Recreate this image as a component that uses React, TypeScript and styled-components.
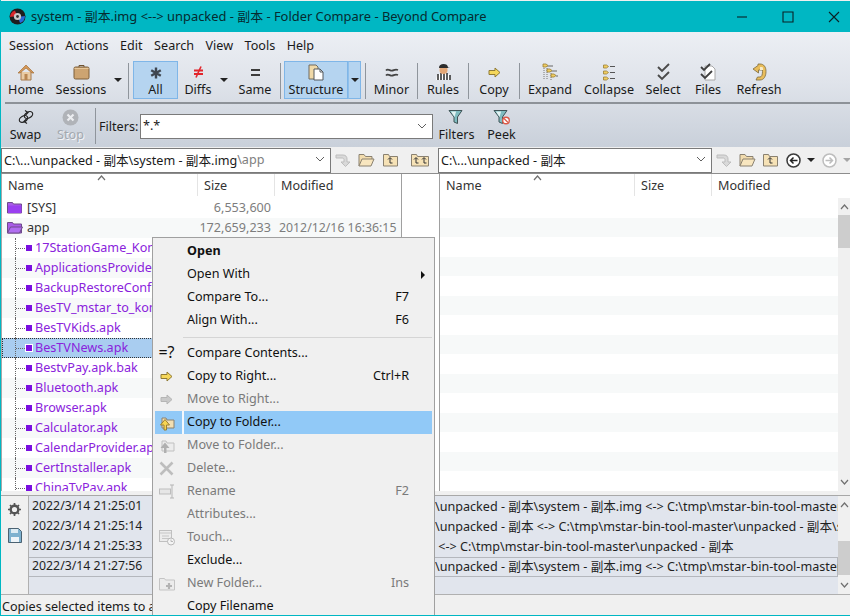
import styled, { createGlobalStyle } from 'styled-components';
import type { ReactNode } from 'react';

const Global = createGlobalStyle`
  html, body { margin: 0; padding: 0; width: 850px; height: 616px; overflow: hidden; background: #fff; }
  body { font-family: "Noto Sans", "Noto Sans CJK SC", sans-serif; font-size: 12.6px; color: #1a1a1a; }
  * { box-sizing: border-box; }
`;

const Window = styled.div`
  position: relative;
  width: 850px;
  height: 616px;
  padding-top: 1px;
  display: flex;
  flex-direction: column;
  border-left: 1px solid #00b7c3;
  border-bottom: 1px solid #00b7c3;
  overflow: hidden;
  background: #f0f0f0;
`;

const TitleBar = styled.div`
  height: 31px;
  flex: none;
  margin-left: -1px;
  background: #00b7c3;
  display: flex;
  align-items: center;
  padding-left: 9px;
  color: #062b30;
  font-size: 12.9px;
`;

const TitleText = styled.span`
  margin-left: 5px;
  padding-bottom: 2px;
  white-space: pre;
  flex: 1;
`;

const WinButtons = styled.div`
  display: flex;
  margin-right: -7px;
`;

const WinButton = styled.div`
  width: 46px;
  display: flex;
  justify-content: center;
  align-items: center;
`;

const Bars = styled.div`
  flex: none;
  background: linear-gradient(#eceff4 0%, #dfe3ea 45%, #c9d0da 100%);
`;

const MenuBar = styled.div`
  height: 28px;
  display: flex;
  align-items: center;
  padding: 0 0 2px 8px;
  gap: 11.5px;
`;

const ToolRow = styled.div`
  height: 42px;
  display: flex;
  align-items: flex-start;
  padding-left: 2px;
  padding-top: 1px;
`;

const Rule = styled.div`
  height: 2px;
  margin-left: 4px;
  background: #8d9298;
`;

const FilterRow = styled.div`
  height: 43px;
  display: flex;
  align-items: flex-start;
  padding-left: 2px;
  padding-top: 2px;
`;

const Tool = styled.div<{ $w: number; $on?: boolean; $off?: boolean }>`
  width: ${(p) => p.$w}px;
  height: 38px;
  flex: none;
  display: flex;
  flex-direction: column;
  align-items: center;
  justify-content: flex-start;
  border: 1px solid ${(p) => (p.$on ? '#7fb6e8' : 'transparent')};
  background: ${(p) => (p.$on ? '#b5d4f0' : 'transparent')};
  color: ${(p) => (p.$off ? '#a3a8af' : 'inherit')};
  text-shadow: ${(p) => (p.$off ? '1px 1px 0 #f4f5f7' : 'none')};
  padding-top: ${(p) => (p.$on ? '2px' : '1px')};
  line-height: 17px;
  white-space: nowrap;
`;

const ToolIcon = styled.div`
  height: 20px;
  display: flex;
  align-items: center;
  justify-content: center;
`;

const Caret = styled.div<{ $w?: number; $on?: boolean; $grey?: boolean }>`
  width: ${(p) => p.$w ?? 10}px;
  height: 38px;
  flex: none;
  display: flex;
  align-items: center;
  justify-content: center;
  border: 1px solid ${(p) => (p.$on ? '#7fb6e8' : 'transparent')};
  border-left: ${(p) => (p.$on ? '1px solid #8fbfeb' : 'none')};
  background: ${(p) => (p.$on ? '#b5d4f0' : 'transparent')};
  &::after {
    content: '';
    border-left: 4px solid transparent;
    border-right: 4px solid transparent;
    border-top: 4px solid ${(p) => (p.$grey ? '#a5a5a5' : '#222')};
  }
`;

const Sep = styled.div<{ $l?: number; $r?: number }>`
  width: 1px;
  height: 36px;
  flex: none;
  margin: 2px ${(p) => p.$r ?? 0}px 0 ${(p) => p.$l ?? 0}px;
  background: #8f959c;
`;

const FilterLabel = styled.span`
  width: 41px;
  margin: 12px 0 0 3px;
  line-height: 17px;
`;

const Combo = styled.div<{ $w: number }>`
  width: ${(p) => p.$w}px;
  height: 25px;
  flex: none;
  display: flex;
  align-items: center;
  justify-content: space-between;
  padding: 0 5px 2px 2px;
  background: #fff;
  border: 1px solid #7a7a7a;
  white-space: pre;
`;

const FilterCombo = styled(Combo)`
  margin: 8px 6px 0 0;
`;

const PathBar = styled.div`
  height: 27px;
  flex: none;
  display: flex;
  align-items: center;
  border-bottom: 1px solid #8d8d8d;
  background: #f0f0f0;
`;

const PathIcon = styled.div<{ $w: number }>`
  width: ${(p) => p.$w}px;
  flex: none;
  display: flex;
  justify-content: center;
  align-items: center;
`;

const Dim = styled.span`
  color: #808080;
`;

const Panes = styled.div`
  flex: 1;
  min-height: 0;
  display: flex;
  background: #fff;
`;

const LeftPane = styled.div`
  width: 438px;
  flex: none;
  overflow: hidden;
`;

const LeftList = styled.div`
  width: 401px;
  height: 100%;
  border-right: 1px solid #a0a0a0;
  border-left: 1px solid #a8a8a8;
  overflow: hidden;
`;

const RightPane = styled.div`
  flex: 1;
  position: relative;
  display: flex;
  flex-direction: column;
  border-left: 1px solid #a0a0a0;
  overflow: hidden;
`;

const Header = styled.div`
  position: relative;
  height: 24px;
  flex: none;
  display: flex;
  align-items: flex-start;
  color: #333;
`;

const SortMark = styled.div<{ $x: number }>`
  position: absolute;
  left: ${(p) => p.$x}px;
  top: 1px;
  display: flex;
`;

const Col = styled.div<{ $w: number; $last?: boolean }>`
  width: ${(p) => p.$w}px;
  height: 22px;
  line-height: 23px;
  flex: none;
  padding-left: 6px;
  border-right: ${(p) => (p.$last ? 'none' : '1px solid #e4e4e4')};
`;

const Row = styled.div<{ $odd?: boolean; $sel?: boolean }>`
  height: 20px;
  padding-bottom: 2px;
  display: flex;
  align-items: center;
  white-space: nowrap;
  position: relative;
  background: ${(p) => (p.$sel ? '#a9cdf0' : p.$odd ? '#f7f9f9' : '#fff')};
  outline: ${(p) => (p.$sel ? '1px dotted #333' : 'none')};
  outline-offset: -1px;
`;

const Blank = styled.div<{ $odd?: boolean }>`
  height: 20px;
  margin-right: 12px;
  background: ${(p) => (p.$odd ? '#f7f9f9' : '#fff')};
`;

const FolderSlot = styled.div`
  width: 25px;
  padding-left: 5px;
  flex: none;
  display: flex;
  align-items: center;
`;

const TreeLine = styled.div`
  position: absolute;
  left: 0;
  top: 0;
  width: 32px;
  height: 20px;
  &::before {
    content: '';
    position: absolute;
    left: 13px;
    top: 0;
    bottom: 0;
    border-left: 1px dotted #666;
  }
  &::after {
    content: '';
    position: absolute;
    left: 14px;
    top: 10px;
    width: 9px;
    border-top: 1px dotted #666;
  }
`;

const Dot = styled.div<{ $sel?: boolean }>`
  position: absolute;
  left: 24px;
  top: 7px;
  width: 6px;
  height: 6px;
  background: #7a10e0;
  outline: ${(p) => (p.$sel ? '1px solid #fff' : 'none')};
`;

const NameText = styled.span<{ $file?: boolean }>`
  color: ${(p) => (p.$file ? '#8a22dc' : '#333')};
  margin-left: ${(p) => (p.$file ? '33px' : '0')};
  width: ${(p) => (p.$file ? '197px' : '170px')};
  flex: none;
`;

const SizeText = styled.span`
  width: 74px;
  text-align: right;
  flex: none;
  color: #7d7d7d;
`;

const DateText = styled.span`
  margin-left: 8px;
  font-size: 12.3px;
  color: #7d7d7d;
`;

const VBar = styled.div<{ $top?: number }>`
  position: absolute;
  right: 0;
  top: ${(p) => p.$top ?? 0}px;
  bottom: 0;
  width: 12px;
  background: #f0f0f0;
  display: flex;
  flex-direction: column;
  align-items: center;
`;

const Chevron = styled.div<{ $down?: boolean }>`
  height: 17px;
  flex: none;
  display: flex;
  align-items: center;
  justify-content: center;
  transform: ${(p) => (p.$down ? 'rotate(180deg)' : 'none')};
`;

const Thumb = styled.div<{ $h: number; $gap?: number }>`
  width: 100%;
  height: ${(p) => p.$h}px;
  margin-top: ${(p) => p.$gap ?? 0}px;
  flex: none;
  background: #cdcdcd;
`;

const Fill = styled.div`
  flex: 1;
`;

const Splitter = styled.div`
  height: 5px;
  flex: none;
  background: #f0f0f0;
  border-bottom: 1px solid #a8a8a8;
`;

const LogArea = styled.div`
  height: 99px;
  flex: none;
  display: flex;
  border-bottom: 1px solid #b0b0b0;
`;

const LogGutter = styled.div`
  width: 27px;
  flex: none;
  display: flex;
  flex-direction: column;
  align-items: center;
  gap: 12px;
  padding-top: 7px;
`;

const LogList = styled.div`
  flex: 1;
  position: relative;
  background: #e1e5ed;
  border-left: 1px solid #b0b0b0;
  padding: 1px 12px 0 0;
  overflow: hidden;
`;

const LogRow = styled.div<{ $cur?: boolean }>`
  height: 20px;
  display: flex;
  align-items: center;
  white-space: pre;
  padding: 0 0 3px 3px;
  border: 1px solid ${(p) => (p.$cur ? '#b4b7bd' : 'transparent')};
  border-left: none;
  color: #1f1f1f;
`;

const LogTime = styled.span`
  width: 403px;
  flex: none;
  font-size: 12.3px;
`;

const Status = styled.div`
  height: 20px;
  flex: none;
  display: flex;
  align-items: center;
  padding: 3px 0 0 1px;
  white-space: nowrap;
`;

const Menu = styled.div`
  position: absolute;
  left: 151px;
  top: 237px;
  width: 283px;
  height: 390px;
  padding: 2px;
  background: #f0f0f0;
  border: 1px solid #a0a0a0;
`;

const Item = styled.div<{ $off?: boolean; $hot?: boolean; $bold?: boolean }>`
  height: 23px;
  display: flex;
  align-items: center;
  color: ${(p) => (p.$off ? '#7a7a7a' : '#111')};
  font-weight: ${(p) => (p.$bold ? 700 : 400)};
  background: ${(p) => (p.$hot ? '#91c9f7' : 'transparent')};
`;

const ItemIcon = styled.div<{ $hot?: boolean }>`
  width: 29px;
  height: 100%;
  flex: none;
  display: flex;
  align-items: center;
  justify-content: center;
  padding-right: 4px;
  border-right: 2px solid ${(p) => (p.$hot ? '#f4f8fc' : 'transparent')};
`;

const ItemSign = styled.span`
  font-size: 16px;
  padding-bottom: 3px;
  white-space: nowrap;
`;

const ItemText = styled.span`
  margin-left: 3px;
  padding-bottom: 3px;
  flex: 1;
`;

const Shortcut = styled.span`
  width: 60px;
  padding-bottom: 3px;
  text-align: right;
  white-space: nowrap;
  margin-right: 23px;
`;

const SubArrow = styled.div`
  margin-right: 7px;
  border-top: 4px solid transparent;
  border-bottom: 4px solid transparent;
  border-left: 4px solid #111;
`;

const Divider = styled.div`
  height: 10px;
  margin-left: 28px;
  display: flex;
  align-items: center;
  &::after {
    content: '';
    width: 100%;
    border-top: 1px solid #d5d5d5;
  }
`;

/* icons */
const Svg = ({ w, h, children }: { w: number; h: number; children: ReactNode }) => (
  <svg width={w} height={h} viewBox={`0 0 ${w} ${h}`} fill="none">
    {children}
  </svg>
);

const AppLogo = () => (
  <Svg w={17} h={17}>
    <circle cx="8.5" cy="8.5" r="8" fill="#1e1e1e" />
    <path d="M1 9a7.5 7.5 0 0 1 5-6.5L8 8z" fill="#d8262a" />
    <path d="M16 8a7.5 7.5 0 0 1-5 7L9 9z" fill="#2868d8" />
    <circle cx="8.5" cy="8.5" r="3.6" fill="#c9c9c9" />
    <circle cx="8.5" cy="8.5" r="1.4" fill="#333" />
  </Svg>
);

const Home = () => (
  <Svg w={18} h={17}>
    <path d="M4 8v8h10V8" fill="#e9cba4" stroke="#a67b4d" />
    <path d="M1 9l8-8 8 8-2 0-6-5-6 5z" fill="#d49858" stroke="#a5703a" strokeWidth=".7" />
    <rect x="7.5" y="10" width="3" height="6" fill="#b88652" />
  </Svg>
);

const Case = () => (
  <Svg w={17} h={16}>
    <path d="M6 3V1.5h5V3" stroke="#6e5230" />
    <rect x="1" y="3" width="15" height="12" rx="1.5" fill="#cda471" stroke="#7c5f3a" />
    <path d="M1.5 4.5h14" stroke="#e6c79b" />
  </Svg>
);

const Star = () => (
  <Svg w={12} h={12}>
    <path d="M6 .5v11M1.2 3.2l9.6 5.6M10.8 3.2L1.2 8.8" stroke="#3f4650" strokeWidth="2.4" />
  </Svg>
);

const NotEq = () => (
  <Svg w={11} h={12}>
    <path d="M1 4.5h9M1 8h9" stroke="#e2262c" strokeWidth="2" />
    <path d="M8 .5L3 11.5" stroke="#e2262c" strokeWidth="1.6" />
  </Svg>
);

const Eq = () => (
  <Svg w={11} h={9}>
    <path d="M1 2h9M1 7h9" stroke="#3c3c3c" strokeWidth="2" />
  </Svg>
);

const Docs = () => (
  <Svg w={16} h={17}>
    <path d="M1 1h7l2 2v12H1z" fill="#f0d9a8" stroke="#6f6a60" />
    <path d="M6 5h6l3 3v8H6z" fill="#fff" stroke="#55585c" />
    <path d="M12 5v3h3" stroke="#55585c" />
  </Svg>
);

const Waves = () => (
  <Svg w={14} h={11}>
    <path d="M1 3.5c2-2.5 4 .5 6 .2s3-2 6-.7M1 8.5c2-2.5 4 .5 6 .2s3-2 6-.7" stroke="#444" strokeWidth="1.7" />
  </Svg>
);

const Referee = () => (
  <Svg w={17} h={18}>
    <path d="M1 17l1-5 4-2h5l4 2 1 5z" fill="#fff" />
    <path d="M3 11v6M6 10v7M9 10v7M12 10v7M15 12v5" stroke="#2a2a2a" strokeWidth="1.5" />
    <circle cx="8.5" cy="7" r="4" fill="#e5a877" />
    <path d="M4 5c0-3 2-4 4.500-4S13 2 13 4.500l2 .5H4z" fill="#2c2c2c" />
  </Svg>
);

const YellowArrow = ({ off }: { off?: boolean }) => (
  <Svg w={13} h={11}>
    <path
      d="M1 3.500h6V1l5 4.500L7 10V7.500H1z"
      fill={off ? '#c9c9c9' : '#f5d75a'}
      stroke={off ? '#b5b5b5' : '#8f7a35'}
    />
  </Svg>
);

const Tag = ({ x, y }: { x: number; y: number }) => (
  <path d={`M${x} ${y}h3l2 1.500-2 1.500h-3z`} fill="#f0cd62" stroke="#9a7f33" strokeWidth=".8" />
);

const Expand = () => (
  <Svg w={17} h={18}>
    <path d="M2 3v14M5 3v14M9 8v9" stroke="#777" strokeDasharray="1 1" />
    <Tag x={1} y={1} />
    <Tag x={5} y={6} />
    <Tag x={9} y={11} />
    <path d="M6 3h5M10 8h5M14 13h2" stroke="#666" />
  </Svg>
);

const Collapse = () => (
  <Svg w={12} h={17}>
    <Tag x={0.5} y={1} />
    <Tag x={0.5} y={7} />
    <Tag x={0.5} y={13} />
    <path d="M7 2.500h5M7 8.500h5M7 14.500h5" stroke="#555" />
  </Svg>
);

const Select = () => (
  <Svg w={15} h={18}>
    <path d="M2 4l4 4 7-7M2 12l4 4 7-7" stroke="#4a4a4a" strokeWidth="1.9" />
  </Svg>
);

const Files = () => (
  <Svg w={16} h={18}>
    <path d="M5 3h7l3 3v11H5z" fill="#fff" stroke="#a8a8a8" />
    <path d="M1 4l3 3 6-6M1 11l4 4 7-7" stroke="#3f3f3f" strokeWidth="1.8" />
  </Svg>
);

const Refresh = () => (
  <Svg w={15} h={18}>
    <path
      d="M6 1h2c4 0 6 3 6 7.500S12 17 8 17H4l1.500-3H8c1.500 0 2.500-2 2.500-5.500 0-.6 0-1-.1-1.500H6.500v3L1 6l5-3.500z"
      fill="#e9bd5b"
      stroke="#7c6a3a"
      strokeWidth=".8"
    />
    <path d="M8 4h2.500c.5 1 .7 2 .7 3H8z" fill="#f8ecc8" />
  </Svg>
);

const Swap = () => (
  <Svg w={16} h={14}>
    <ellipse cx="5.500" cy="9" rx="4.500" ry="3" transform="rotate(-30 5.500 9)" stroke="#222" strokeWidth="1.200" />
    <ellipse cx="10.500" cy="5" rx="4.500" ry="3" transform="rotate(-30 10.500 5)" stroke="#222" strokeWidth="1.200" />
    <path d="M7 .5l3 2-2.500 2.500M9 13.500l-3-2 2.500-2.500" stroke="#222" strokeWidth="1.200" />
  </Svg>
);

const Stop = () => (
  <Svg w={17} h={17}>
    <circle cx="8.500" cy="8.500" r="8" fill="#b0b3b8" />
    <path d="M5.500 5.500l6 6M11.500 5.500l-6 6" stroke="#eceef1" strokeWidth="2.200" />
  </Svg>
);

const Funnel = ({ no }: { no?: boolean }) => (
  <Svg w={18} h={16}>
    <path d="M1 1.500h13L9.500 8v6.500L6 13V8z" fill="#7fbcc0" stroke="#3f5457" />
    <path d="M3 2.500h5l0 .5L6.500 8z" fill="#e4f3f3" />
    {no && (
      <g>
        <circle cx="13" cy="11.500" r="3.300" fill="#fff" stroke="#dc5a48" strokeWidth="1.400" />
        <path d="M11 9.500l4 4" stroke="#dc5a48" strokeWidth="1.300" />
      </g>
    )}
  </Svg>
);

const CurveArrow = () => (
  <Svg w={16} h={14}>
    <path d="M1 2h7c3 0 4 2 4 4v3h3l-4.500 4.500L6 9h3V6.500C9 5.500 8 5 7 5H1z" fill="#d9d9d9" stroke="#bdbdbd" />
  </Svg>
);

const OpenFolder = () => (
  <Svg w={17} h={14}>
    <path d="M1 13V1.500h5l1.500 2H14v2.500" fill="#f2dcae" stroke="#8a8170" />
    <path d="M1 13l3-7h12l-3 7z" fill="#f8e6bf" stroke="#8a8170" />
  </Svg>
);

const UpFolder = ({ two }: { two?: boolean }) => (
  <Svg w={two ? 18 : 15} h={14}>
    <path d={`M.5 13V1.500h5l1 2h${two ? 11 : 8}V13z`} fill="#f6e2b6" stroke="#8a8170" />
    <path d="M5 6.500l2-2 2 2M7 5v5h2.500" stroke="#333" strokeWidth="1" transform={two ? 'translate(-2 0)' : undefined} />
    {two && <path d="M11 6.500l2-2 2 2M13 5v5h2.500" stroke="#333" strokeWidth="1" />}
  </Svg>
);

const NavCircle = ({ off, flip }: { off?: boolean; flip?: boolean }) => (
  <Svg w={15} h={15}>
    <circle cx="7.500" cy="7.500" r="6.500" fill="#fff" stroke={off ? '#bdbdbd' : '#3a3a3a'} strokeWidth="1.500" />
    <path
      d={flip ? 'M3.500 7.500h7M7.500 4.500l3 3-3 3' : 'M4 7.500h7.500M7.500 4.500l-3 3 3 3'}
      stroke={off ? '#bdbdbd' : '#222'}
      strokeWidth="1.500"
    />
  </Svg>
);

const ComboArrow = () => (
  <Svg w={10} h={6}>
    <path d="M1 1l4 4 4-4" stroke="#606060" />
  </Svg>
);

const Up = ({ w = 10 }: { w?: number }) => (
  <Svg w={w} h={6}>
    <path d={`M1 5l${w / 2 - 1}-4 ${w / 2 - 1} 4`} stroke="#707070" strokeWidth="1.200" />
  </Svg>
);

const Folder = ({ open }: { open?: boolean }) => (
  <Svg w={16} h={13}>
    <path d="M.5 12V1.500h5l1 1.500h8v9z" fill="#a95de8" stroke="#6e4b8a" />
    {open ? (
      <path d="M.5 12l3-6h12l-3 6z" fill="#b06ef0" stroke="#6e4b8a" />
    ) : (
      <path d="M1 4.500h13.500V12H1z" fill="#9a3ff0" />
    )}
  </Svg>
);

const Gear = () => (
  <Svg w={13} h={13}>
    <circle cx="6.500" cy="6.500" r="3.800" stroke="#555" strokeWidth="2.400" />
    <path d="M6.500 0v13M0 6.500h13M2 2l9 9M11 2l-9 9" stroke="#555" strokeWidth="1.700" strokeDasharray="2.200 8.600" />
  </Svg>
);

const Disk = () => (
  <Svg w={14} h={15}>
    <path d="M.5.500h10l3 3v11H.5z" fill="#7db1cf" stroke="#4b6272" />
    <rect x="3" y="1" width="7" height="4" fill="#dcebf3" />
    <rect x="3" y="9" width="8" height="5" fill="#eef4f8" />
  </Svg>
);

const FolderCopy = () => (
  <Svg w={16} h={16}>
    <path d="M3 13V3h4l1 2h7v8z" fill="#f3dfb2" stroke="#8a8170" />
    <path d="M5 15v-5H1.500L6 4.500 10.500 10H7.500v5z" fill="#f7d552" stroke="#9a7f33" />
  </Svg>
);

const FolderMove = () => (
  <Svg w={16} h={16}>
    <path d="M3 13V3h4l1 2h7v8z" fill="#ececec" stroke="#c0c0c0" />
    <path d="M5 15v-5H1.500L6 4.500 10.500 10H7.500v5z" fill="#b0b0b0" />
  </Svg>
);

const Cross = () => (
  <Svg w={15} h={15}>
    <path d="M1.500 1.500l12 12M13.500 1.500l-12 12" stroke="#bdbdbd" strokeWidth="2.600" />
  </Svg>
);

const RenameIcon = () => (
  <Svg w={16} h={15}>
    <rect x=".5" y="5" width="11" height="5" fill="#e6e6e6" stroke="#bdbdbd" />
    <path d="M11 1h4M13 1v13M11 14h4" stroke="#b5b5b5" />
  </Svg>
);

const TouchIcon = () => (
  <Svg w={16} h={16}>
    <rect x=".5" y=".5" width="12" height="11" fill="#ececec" stroke="#c0c0c0" />
    <path d="M1 3h11M3 6h7M3 8.500h7" stroke="#c6c6c6" />
    <circle cx="12" cy="11.500" r="3.500" fill="#f4f4f4" stroke="#b8b8b8" />
    <path d="M12 9.500v2h2" stroke="#b8b8b8" />
  </Svg>
);

const NewFolderIcon = () => (
  <Svg w={16} h={14}>
    <path d="M.5 13V1.500h5l1 1.500h9v10z" fill="#ececec" stroke="#c4c4c4" />
    <path d="M10 6v6M7 9h6" stroke="#b4b4b4" strokeWidth="2.200" />
  </Svg>
);

const Dash = ({ d }: { d: string }) => (
  <svg width="12" height="12" viewBox="0 0 12 12" fill="none">
    <path d={d} stroke="#0a2226" strokeWidth="1.100" />
  </svg>
);

const files = [
  '17StationGame_Konka.apk',
  'ApplicationsProvider.apk',
  'BackupRestoreConfirmation.apk',
  'BesTV_mstar_to_konka.apk',
  'BesTVKids.apk',
  'BesTVNews.apk',
  'BestvPay.apk.bak',
  'Bluetooth.apk',
  'Browser.apk',
  'Calculator.apk',
  'CalendarProvider.apk',
  'CertInstaller.apk',
  'ChinaTvPay.apk',
];

const logs = [
  ['2022/3/14 21:25:01', '\\unpacked - 副本\\system - 副本.img <-> C:\\tmp\\mstar-bin-tool-master\\unpacked'],
  ['2022/3/14 21:25:14', '\\unpacked - 副本 <-> C:\\tmp\\mstar-bin-tool-master\\unpacked - 副本\\system - 副本.img'],
  ['2022/3/14 21:25:33', ' <-> C:\\tmp\\mstar-bin-tool-master\\unpacked - 副本'],
  ['2022/3/14 21:27:56', '\\unpacked - 副本\\system - 副本.img <-> C:\\tmp\\mstar-bin-tool-master\\unpacked'],
];

export default function App() {
  return (
    <>
      <Global />
      <Window>
        <TitleBar>
          <AppLogo />
          <TitleText>system - 副本.img {'<-->'} unpacked - 副本 - Folder Compare - Beyond Compare</TitleText>
          <WinButtons>
            <WinButton><Dash d="M1 6h10" /></WinButton>
            <WinButton><Dash d="M1 1h10v10H1z" /></WinButton>
            <WinButton><Dash d="M1 1l10 10M11 1L1 11" /></WinButton>
          </WinButtons>
        </TitleBar>

        <Bars>
          <MenuBar>
            <span>Session</span>
            <span>Actions</span>
            <span>Edit</span>
            <span>Search</span>
            <span>View</span>
            <span>Tools</span>
            <span>Help</span>
          </MenuBar>
          <ToolRow>
            <Tool $w={46}><ToolIcon><Home /></ToolIcon>Home</Tool>
            <Tool $w={64}><ToolIcon><Case /></ToolIcon>Sessions</Tool>
            <Caret />
            <Sep $l={5} $r={4} />
            <Tool $w={45} $on><ToolIcon><Star /></ToolIcon>All</Tool>
            <Tool $w={40}><ToolIcon><NotEq /></ToolIcon>Diffs</Tool>
            <Caret $w={12} />
            <Tool $w={50}><ToolIcon><Eq /></ToolIcon>Same</Tool>
            <Sep $r={3} />
            <Tool $w={64} $on><ToolIcon><Docs /></ToolIcon>Structure</Tool>
            <Caret $w={13} $on />
            <Sep $l={4} />
            <Tool $w={51}><ToolIcon><Waves /></ToolIcon>Minor</Tool>
            <Sep />
            <Tool $w={50}><ToolIcon><Referee /></ToolIcon>Rules</Tool>
            <Sep />
            <Tool $w={50}><ToolIcon><YellowArrow /></ToolIcon>Copy</Tool>
            <Sep />
            <Tool $w={60}><ToolIcon><Expand /></ToolIcon>Expand</Tool>
            <Tool $w={58}><ToolIcon><Collapse /></ToolIcon>Collapse</Tool>
            <Tool $w={50}><ToolIcon><Select /></ToolIcon>Select</Tool>
            <Tool $w={40}><ToolIcon><Files /></ToolIcon>Files</Tool>
            <Tool $w={62}><ToolIcon><Refresh /></ToolIcon>Refresh</Tool>
          </ToolRow>
          <Rule />
          <FilterRow>
            <Tool $w={45}><ToolIcon><Swap /></ToolIcon>Swap</Tool>
            <Tool $w={45} $off><ToolIcon><Stop /></ToolIcon>Stop</Tool>
            <Sep $l={2} />
            <FilterLabel>Filters:</FilterLabel>
            <FilterCombo $w={293}>*.*<ComboArrow /></FilterCombo>
            <Tool $w={35}><ToolIcon><Funnel /></ToolIcon>Filters</Tool>
            <Tool $w={55}><ToolIcon><Funnel no /></ToolIcon>Peek</Tool>
          </FilterRow>
        </Bars>

        <PathBar>
          <Combo $w={330}>C:\...\unpacked - 副本\system - 副本.img<Dim>\app</Dim><Fill /><ComboArrow /></Combo>
          <PathIcon $w={23}><CurveArrow /></PathIcon>
          <PathIcon $w={24}><OpenFolder /></PathIcon>
          <PathIcon $w={24}><UpFolder /></PathIcon>
          <PathIcon $w={36}><UpFolder two /></PathIcon>
          <Combo $w={274}>C:\...\unpacked - 副本<ComboArrow /></Combo>
          <PathIcon $w={23}><CurveArrow /></PathIcon>
          <PathIcon $w={24}><OpenFolder /></PathIcon>
          <PathIcon $w={23}><UpFolder /></PathIcon>
          <PathIcon $w={23}><NavCircle /></PathIcon>
          <Caret $w={12} />
          <PathIcon $w={25}><NavCircle off flip /></PathIcon>
          <Caret $w={10} $grey />
        </PathBar>

        <Panes>
          <LeftPane>
            <LeftList>
              <Header>
                <SortMark $x={95}><Up w={9} /></SortMark>
                <Col $w={196}>Name</Col>
                <Col $w={77}>Size</Col>
                <Col $w={125} $last>Modified</Col>
              </Header>
              <Row>
                <FolderSlot><Folder /></FolderSlot>
                <NameText>[SYS]</NameText>
                <SizeText>6,553,600</SizeText>
              </Row>
              <Row $odd>
                <FolderSlot><Folder open /></FolderSlot>
                <NameText>app</NameText>
                <SizeText>172,659,233</SizeText>
                <DateText>2012/12/16 16:36:15</DateText>
              </Row>
              {files.map((name, i) => (
                <Row key={name} $odd={i % 2 === 1} $sel={name === 'BesTVNews.apk'}>
                  <TreeLine>
                    <Dot $sel={name === 'BesTVNews.apk'} />
                  </TreeLine>
                  <NameText $file>{name}</NameText>
                </Row>
              ))}
            </LeftList>
          </LeftPane>
          <RightPane>
            <Header>
              <SortMark $x={93}><Up w={9} /></SortMark>
              <Col $w={195}>Name</Col>
              <Col $w={77}>Size</Col>
              <Col $w={125} $last>Modified</Col>
            </Header>
            {Array.from({ length: 15 }, (_, i) => (
              <Blank key={i} $odd={i % 2 === 1} />
            ))}
            <VBar $top={24}>
              <Chevron><Up w={9} /></Chevron>
              <Thumb $h={33} />
              <Fill />
              <Chevron $down><Up w={9} /></Chevron>
            </VBar>
          </RightPane>
        </Panes>

        <Splitter />
        <LogArea>
          <LogGutter>
            <Gear />
            <Disk />
          </LogGutter>
          <LogList>
            {logs.map(([time, text], i) => (
              <LogRow key={time} $cur={i === 3}>
                <LogTime>{time}</LogTime>
                {text}
              </LogRow>
            ))}
            <VBar>
              <Chevron><Up w={9} /></Chevron>
              <Thumb $h={34} $gap={28} />
              <Fill />
              <Chevron $down><Up w={9} /></Chevron>
            </VBar>
          </LogList>
        </LogArea>
        <Status>Copies selected items to a folder</Status>

        <Menu>
          <Item $bold><ItemIcon /><ItemText>Open</ItemText></Item>
          <Item><ItemIcon /><ItemText>Open With</ItemText><SubArrow /></Item>
          <Item><ItemIcon /><ItemText>Compare To...</ItemText><Shortcut>F7</Shortcut></Item>
          <Item><ItemIcon /><ItemText>Align With...</ItemText><Shortcut>F6</Shortcut></Item>
          <Divider />
          <Item><ItemIcon><ItemSign>=?</ItemSign></ItemIcon><ItemText>Compare Contents...</ItemText></Item>
          <Item><ItemIcon><YellowArrow /></ItemIcon><ItemText>Copy to Right...</ItemText><Shortcut>Ctrl+R</Shortcut></Item>
          <Item $off><ItemIcon><YellowArrow off /></ItemIcon><ItemText>Move to Right...</ItemText></Item>
          <Item $hot><ItemIcon $hot><FolderCopy /></ItemIcon><ItemText>Copy to Folder...</ItemText></Item>
          <Item $off><ItemIcon><FolderMove /></ItemIcon><ItemText>Move to Folder...</ItemText></Item>
          <Item $off><ItemIcon><Cross /></ItemIcon><ItemText>Delete...</ItemText></Item>
          <Item $off><ItemIcon><RenameIcon /></ItemIcon><ItemText>Rename</ItemText><Shortcut>F2</Shortcut></Item>
          <Item $off><ItemIcon /><ItemText>Attributes...</ItemText></Item>
          <Item $off><ItemIcon><TouchIcon /></ItemIcon><ItemText>Touch...</ItemText></Item>
          <Item><ItemIcon /><ItemText>Exclude...</ItemText></Item>
          <Item $off><ItemIcon><NewFolderIcon /></ItemIcon><ItemText>New Folder...</ItemText><Shortcut>Ins</Shortcut></Item>
          <Item><ItemIcon /><ItemText>Copy Filename</ItemText></Item>
        </Menu>
      </Window>
    </>
  );
}
